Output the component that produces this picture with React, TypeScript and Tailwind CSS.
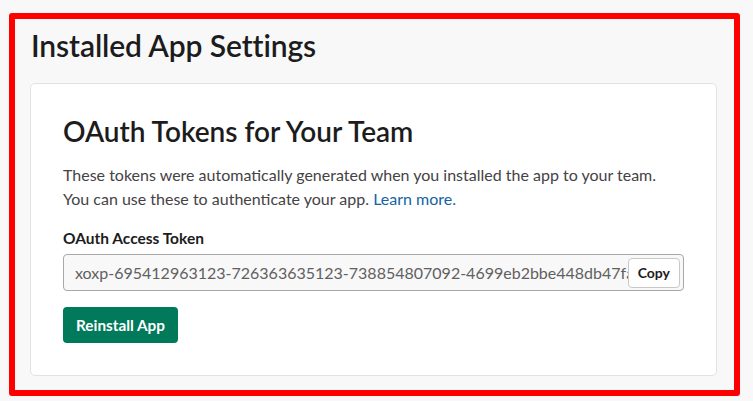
export default function App() {
  return (
    <div className="w-[753px] h-[401px] bg-[#f8f8f8] pt-[13px] pl-[9px] font-['Lato',sans-serif] text-[#1d1c1d]">
      {/* red annotation frame */}
      <div className="w-[731px] h-[383px] border-[6px] border-[#ff0000] rounded-[3px] flex flex-col">
        <h1 className="pl-[16px] pt-[8px] text-[30px] leading-[36px] font-semibold tracking-[-0.1px]">
          Installed App Settings
        </h1>

        <div className="ml-[15px] mr-[17px] mt-[20px] h-[293px] bg-white border border-[#e2e2e2] rounded-[5px] px-[32px] pt-[30px]">
          <h2 className="text-[28px] leading-[34px] font-semibold">OAuth Tokens for Your Team</h2>

          <p className="mt-[15px] text-[16px] leading-[24px] text-[#454245]">
            These tokens were automatically generated when you installed the app to your team.
            <br />
            You can use these to authenticate your app.{" "}
            <a href="#" className="text-[#1264a3]">
              Learn more.
            </a>
          </p>

          <div className="mt-[17px] text-[15.5px] leading-[20px] font-bold">OAuth Access Token</div>

          <div className="mt-[6px] flex items-center h-[37px] bg-[#f8f8f8] border border-[#a8a8a8] rounded-[4px] pl-[11px] pr-[3px] overflow-hidden">
            <span className="flex-1 min-w-0 whitespace-nowrap overflow-hidden text-[16px] text-[#616061]">
              xoxp-695412963123-726363635123-738854807092-4699eb2bbe448db47fa3c9d1e2
            </span>
            <button className="shrink-0 h-[30px] px-[9px] bg-white border border-[#c8c8c8] rounded-[4px] text-[14px] font-bold text-[#1d1c1d]">
              Copy
            </button>
          </div>

          <button className="mt-[16px] h-[36px] px-[13px] bg-[#007a5a] rounded-[4px] text-white text-[15.3px] font-bold">
            Reinstall App
          </button>
        </div>
      </div>
    </div>
  );
}
